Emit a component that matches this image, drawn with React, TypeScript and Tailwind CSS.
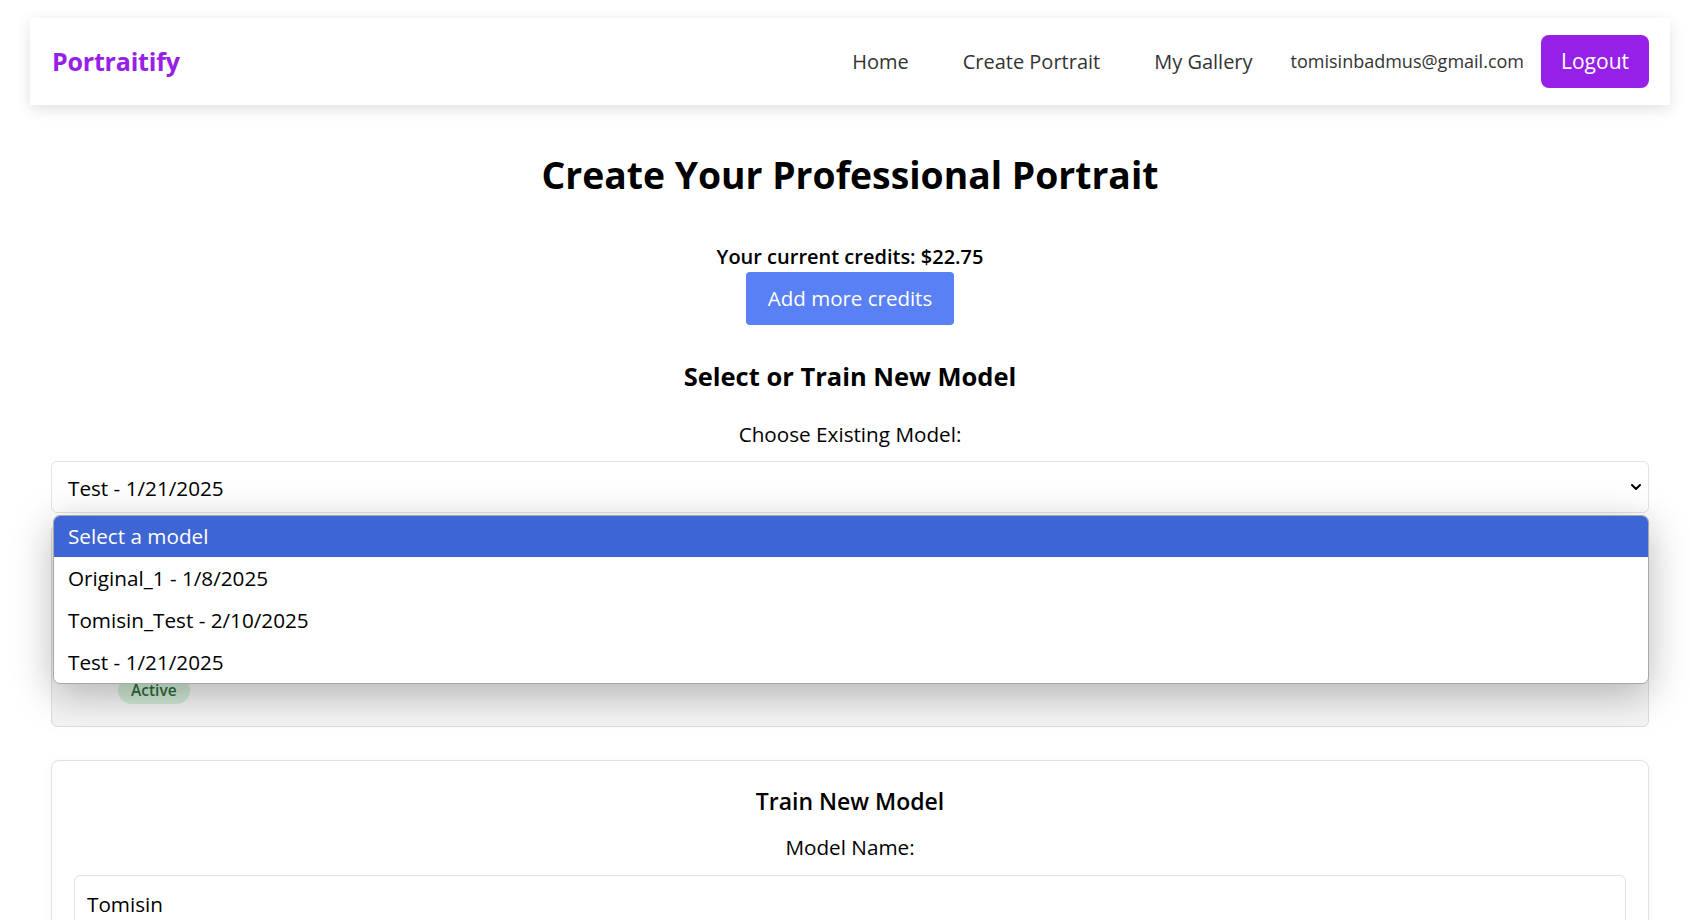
import { ChevronDown } from 'lucide-react'

const models = ['Original_1 - 1/8/2025', 'Tomisin_Test - 2/10/2025', 'Test - 1/21/2025']

function Navbar() {
  return (
    <nav className="mx-5 mt-[18px] h-[87px] bg-white shadow-[0_4px_14px_rgba(0,0,0,0.12)] flex items-center justify-between pl-[22px] pr-[21px]">
      <a href="#" className="text-[25px] font-bold text-[#9720e8] tracking-[-0.2px]">
        Portraitify
      </a>
      <div className="flex items-center text-[#333]">
        <a href="#" className="text-[20px] mr-[54px]">Home</a>
        <a href="#" className="text-[20px] mr-[54px]">Create Portrait</a>
        <a href="#" className="text-[20px] mr-[38px]">My Gallery</a>
        <span className="text-[18px] mr-[17px]">tomisinbadmus@gmail.com</span>
        <button className="h-[53px] px-[20px] rounded-lg bg-[#9720e8] text-white text-[21px]">
          Logout
        </button>
      </div>
    </nav>
  )
}

function ModelPicker() {
  return (
    <div className="relative">
      <div className="h-[52px] rounded-md border border-[#e3e3e3] bg-white flex items-center justify-between pl-4 pr-[4px] pt-[3px] text-[20.7px] text-black">
        <span>Test - 1/21/2025</span>
        <ChevronDown size={16} strokeWidth={3} className="-mt-[3px]" />
      </div>

      {/* model card, mostly hidden under the open select */}
      <div className="mt-[12px] h-[202px] rounded-md border border-[#dcdcdc] bg-[#f4f4f5] flex items-end pb-[22px] pl-[66px]">
        <span className="px-[13px] py-[2px] rounded-full bg-[#cfe9d4] text-[#2d6a3b] text-[15.5px] font-semibold">
          Active
        </span>
      </div>

      <div className="absolute left-[2px] right-0 top-[54px] rounded-[7px] border border-[#a8a8a8] bg-white overflow-hidden shadow-[0_10px_40px_rgba(0,0,0,0.28)] text-[20.7px] text-black">
        <div className="h-[41px] flex items-center px-[14px] bg-[#3d65d3] text-white">Select a model</div>
        {models.map((m) => (
          <div key={m} className="h-[42px] flex items-center px-[14px] pt-[2px]">
            {m}
          </div>
        ))}
      </div>
    </div>
  )
}

export default function App() {
  return (
    <div className="min-h-screen bg-white pl-[10px] pb-10 font-['Open_Sans',sans-serif]">
      <Navbar />
      <main className="w-[1598px] mx-auto">
        <h1 className="mt-[47px] text-center text-[37.3px] leading-[46px] font-bold text-black">
          Create Your Professional Portrait
        </h1>
        <div className="mt-[47px] flex flex-col items-center">
          <p className="text-[20px] leading-[24px] font-semibold text-black">Your current credits: $22.75</p>
          <button className="mt-[3px] h-[53px] px-[22px] rounded bg-[#5a80f5] text-white text-[20.5px]">
            Add more credits
          </button>
        </div>

        <h2 className="mt-[36px] text-center text-[25.5px] leading-[31px] font-bold text-black">
          Select or Train New Model
        </h2>
        <p className="mt-[30px] text-center text-[20.7px] leading-[25px] text-black">Choose Existing Model:</p>
        <div className="mt-[14px]">
          <ModelPicker />
        </div>

        <section className="mt-[33px] rounded-lg border border-[#e2e2e2] bg-white shadow-[0_2px_10px_rgba(0,0,0,0.05)] px-[22px] pt-[26px] pb-6">
          <h3 className="text-center text-[23px] leading-[28px] font-semibold text-black">Train New Model</h3>
          <p className="mt-[20px] text-center text-[20.7px] leading-[25px] text-black">Model Name:</p>
          <div className="mt-[15px] h-[56px] rounded-md border border-[#e3e3e3] flex items-center px-3 pt-[3px] text-[20.7px] text-black">
            Tomisin
          </div>
        </section>
      </main>
    </div>
  )
}
